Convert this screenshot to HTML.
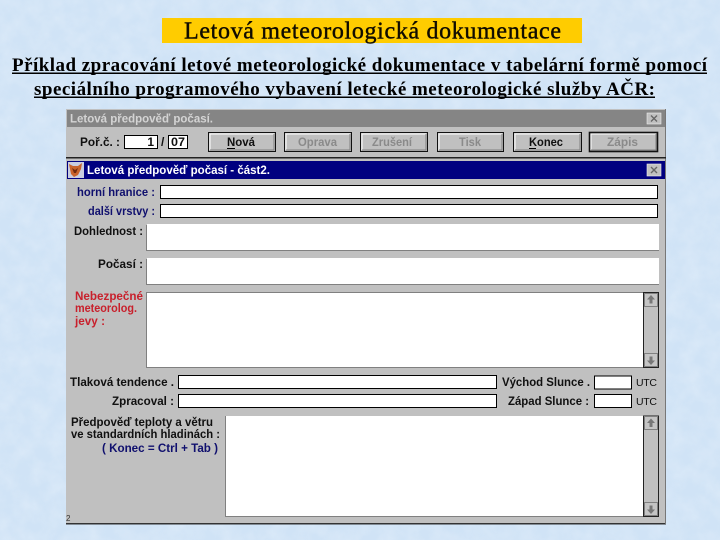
<!DOCTYPE html>
<html lang="cs">
<head>
<meta charset="utf-8">
<title>Letová meteorologická dokumentace</title>
<style>
html,body{margin:0;padding:0;width:720px;height:540px;overflow:hidden;background:#d6e7f8}
svg{display:block}
.ui{font-family:"Liberation Sans",sans-serif;font-size:12px;font-weight:bold;fill:#101010}
.nv{fill:#10106e}
.rd{fill:#c8202c}
.dis{fill:#8a8a8a}
.w{fill:#fff;stroke:#000;stroke-width:1}
.a{fill:#fff}
.sb{fill:#c0c0c0;stroke:#222;stroke-width:1}
</style>
</head>
<body>
<svg xmlns="http://www.w3.org/2000/svg" width="720" height="540" viewBox="0 0 720 540">
<defs>
<filter id="tx" x="0" y="0" width="100%" height="100%">
<feTurbulence type="fractalNoise" baseFrequency="0.06" numOctaves="3" seed="7"/>
<feColorMatrix type="matrix" values="0 0 0 0 0.84  0 0 0 0 0.91  0 0 0 0 0.97  0.9 0 0 0 -0.28"/>
</filter>
</defs>

<rect width="720" height="540" fill="#d0e3f6"/>
<rect width="720" height="540" fill="#e9f2fb" filter="url(#tx)" opacity=".65"/>

<!-- headings -->
<rect x="162" y="18" width="420" height="25" fill="#ffcc00"/>
<text x="184" y="38.500" font-family="Liberation Serif,serif" font-size="24" fill="#100c00" stroke="#100c00" stroke-width=".4" textLength="377" lengthAdjust="spacing">Letová meteorologická dokumentace</text>
<text x="12" y="71" font-family="Liberation Serif,serif" font-size="19" font-weight="bold" fill="#000" textLength="695" lengthAdjust="spacing">Příklad zpracování letové meteorologické dokumentace v tabelární formě pomocí</text>
<rect x="12" y="72.500" width="695" height="1.500" fill="#000"/>
<text x="34" y="95" font-family="Liberation Serif,serif" font-size="19" font-weight="bold" fill="#000" textLength="621" lengthAdjust="spacing">speciálního programového vybavení letecké meteorologické služby AČR:</text>
<rect x="34" y="96.500" width="621" height="1.500" fill="#000"/>

<!-- window -->
<rect x="66" y="109" width="600" height="415" fill="#c0c0c0"/>
<rect x="66" y="523" width="600" height="1.500" fill="#333"/>
<rect x="665" y="109" width="1" height="415" fill="#777"/>
<rect x="67" y="110" width="598" height="17" fill="#858585"/>
<text x="70" y="122.500" class="ui" style="fill:#d4d4d4" textLength="143" lengthAdjust="spacingAndGlyphs">Letová předpověď počasí.</text>
<rect x="647" y="113" width="14" height="11" fill="#c0c0c0" stroke="#eee" stroke-width=".6"/>
<path d="M651 115.500l6 6M657 115.500l-6 6" stroke="#666" stroke-width="1.400"/>

<!-- toolbar -->
<text x="80" y="146" class="ui" textLength="40" lengthAdjust="spacingAndGlyphs">Poř.č. :</text>
<rect x="124.500" y="135.500" width="33" height="13" class="w"/>
<text x="154" y="146" class="ui" text-anchor="end">1</text>
<text x="161" y="146" class="ui">/</text>
<rect x="168.500" y="135.500" width="19" height="13" class="w"/>
<text x="171" y="146" class="ui" textLength="14" lengthAdjust="spacingAndGlyphs">07</text>

<g fill="#c0c0c0" stroke="#111" stroke-width="1">
<rect x="208.500" y="132.500" width="67" height="19"/>
<rect x="284.500" y="132.500" width="67" height="19"/>
<rect x="360.500" y="132.500" width="67" height="19"/>
<rect x="437.500" y="132.500" width="66" height="19"/>
<rect x="513.500" y="132.500" width="68" height="19"/>
<rect x="589.500" y="132.500" width="68" height="19" stroke-width="1.600"/>
</g>
<g fill="none" stroke="#fff" stroke-width="1">
<path d="M210 150V134H274M286 150V134H350M362 150V134H426M439 150V134H502M515 150V134H580M591 150V134H656"/>
</g>
<g fill="none" stroke="#808080" stroke-width="1">
<path d="M210 150H274V134M286 150H350V134M362 150H426V134M439 150H502V134M515 150H580V134M591 150H656V134"/>
</g>
<text x="227" y="146" class="ui" textLength="28" lengthAdjust="spacingAndGlyphs">Nová</text>
<rect x="227" y="148" width="8" height="1" fill="#000"/>
<text x="298" y="146" class="ui dis" textLength="39" lengthAdjust="spacingAndGlyphs">Oprava</text>
<text x="372" y="146" class="ui dis" textLength="40" lengthAdjust="spacingAndGlyphs">Zrušení</text>
<text x="459" y="146" class="ui dis" textLength="22" lengthAdjust="spacingAndGlyphs">Tisk</text>
<text x="529" y="146" class="ui" textLength="34" lengthAdjust="spacingAndGlyphs">Konec</text>
<rect x="529" y="148" width="7" height="1" fill="#000"/>
<text x="607" y="146" class="ui dis" textLength="31" lengthAdjust="spacingAndGlyphs">Zápis</text>

<rect x="66" y="157" width="600" height="1.500" fill="#222"/>

<!-- blue title -->
<rect x="67" y="161" width="598" height="18" fill="#000080"/>
<rect x="68" y="162" width="16" height="16" fill="#c9cde0"/>
<path d="M69 164l4 2h5l4-3-1 6-3 6-4 2-3-3z" fill="#c8622a"/>
<path d="M72 168l3 2 3-2-2 5h-2z" fill="#6e2a10"/>
<text x="87" y="174" class="ui" style="fill:#fff" textLength="183" lengthAdjust="spacingAndGlyphs">Letová předpověď počasí - část2.</text>
<rect x="647" y="164" width="14" height="12" fill="#c0c0c0" stroke="#eee" stroke-width=".6"/>
<path d="M651 167l6 6M657 167l-6 6" stroke="#666" stroke-width="1.400"/>

<!-- upper fields -->
<text x="77" y="196" class="ui nv" textLength="78" lengthAdjust="spacingAndGlyphs">horní hranice :</text>
<rect x="160.500" y="185.500" width="497" height="13" class="w"/>
<text x="88" y="215" class="ui nv" textLength="67" lengthAdjust="spacingAndGlyphs">další vrstvy :</text>
<rect x="160.500" y="204.500" width="497" height="13" class="w"/>

<text x="74" y="235" class="ui" textLength="69" lengthAdjust="spacingAndGlyphs">Dohlednost :</text>
<rect x="146" y="224" width="513" height="26" class="a"/>
<path d="M146.500 250V224.500M146 250.500H659" stroke="#808080" fill="none"/>
<text x="98" y="268" class="ui" textLength="45" lengthAdjust="spacingAndGlyphs">Počasí :</text>
<rect x="146" y="258" width="513" height="26" class="a"/>
<path d="M146.500 284V258.500M146 284.500H659" stroke="#808080" fill="none"/>

<text x="75" y="300" class="ui rd" textLength="68" lengthAdjust="spacingAndGlyphs">Nebezpečné</text>
<text x="75" y="312" class="ui rd" textLength="62" lengthAdjust="spacingAndGlyphs">meteorolog.</text>
<text x="75" y="325" class="ui rd" textLength="30" lengthAdjust="spacingAndGlyphs">jevy :</text>
<rect x="146" y="292" width="497" height="75" class="a"/>
<path d="M146.500 367V292.500H643M146 367.500H659" stroke="#808080" fill="none"/>
<!-- scrollbar 1 -->
<rect x="643.500" y="292.500" width="15" height="75" class="sb"/>
<rect x="644.500" y="293.500" width="13" height="13" fill="#c4c4c4" stroke="#808080"/>
<path d="M651 295l-4 4.500h2.500v4h3v-4h2.500z" fill="#777"/>
<rect x="644.500" y="353.500" width="13" height="13" fill="#c4c4c4" stroke="#808080"/>
<path d="M651 365l-4-4.500h2.500v-4h3v4h2.500z" fill="#777"/>

<!-- mid fields -->
<text x="70" y="386" class="ui" textLength="104" lengthAdjust="spacingAndGlyphs">Tlaková tendence .</text>
<rect x="178.500" y="375.500" width="318" height="13" class="w"/>
<text x="112" y="405" class="ui" textLength="62" lengthAdjust="spacingAndGlyphs">Zpracoval :</text>
<rect x="178.500" y="394.500" width="318" height="13" class="w"/>
<text x="502" y="386" class="ui" textLength="88" lengthAdjust="spacingAndGlyphs">Východ Slunce .</text>
<rect x="594.500" y="376" width="37" height="13" class="w"/>
<text x="508" y="405" class="ui" textLength="81" lengthAdjust="spacingAndGlyphs">Západ Slunce :</text>
<rect x="594.500" y="394.500" width="37" height="13" class="w"/>
<text x="636" y="386" class="ui" style="font-weight:normal;font-size:10.500px" textLength="21" lengthAdjust="spacing">UTC</text>
<text x="636" y="405" class="ui" style="font-weight:normal;font-size:10.500px" textLength="21" lengthAdjust="spacing">UTC</text>

<!-- bottom -->
<text x="71" y="426" class="ui" textLength="142" lengthAdjust="spacingAndGlyphs">Předpověď teploty a větru</text>
<text x="71" y="438" class="ui" textLength="149" lengthAdjust="spacingAndGlyphs">ve standardních hladinách :</text>
<text x="102" y="452" class="ui nv" textLength="116" lengthAdjust="spacingAndGlyphs">( Konec = Ctrl + Tab )</text>
<rect x="225" y="416" width="418" height="100" class="a"/>
<path d="M225.500 516V416M225 516.500H659" stroke="#808080" fill="none"/>
<!-- scrollbar 2 -->
<rect x="643.500" y="416" width="15" height="100.500" class="sb"/>
<rect x="644.500" y="416.500" width="13" height="13" fill="#c4c4c4" stroke="#808080"/>
<path d="M651 418.500l-4 4.500h2.500v4h3v-4h2.500z" fill="#777"/>
<rect x="644.500" y="502.500" width="13" height="13" fill="#c4c4c4" stroke="#808080"/>
<path d="M651 514l-4-4.500h2.500v-4h3v4h2.500z" fill="#777"/>
<text x="66" y="521" font-family="Liberation Sans,sans-serif" font-size="8" fill="#333">2</text>
</svg>
</body>
</html>
